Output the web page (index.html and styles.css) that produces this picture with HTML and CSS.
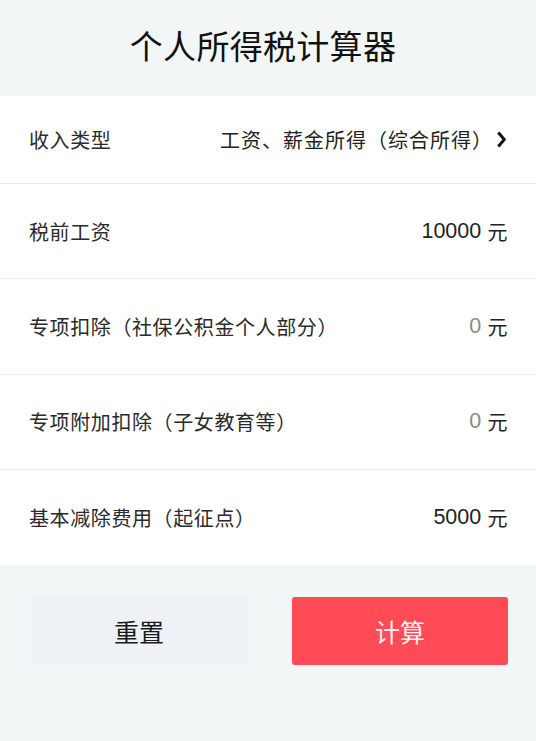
FILE: index.html
```html
<!DOCTYPE html>
<html lang="zh-CN">
<head>
<meta charset="utf-8">
<title>个人所得税计算器</title>
<link rel="stylesheet" href="styles.css">
</head>
<body>
<div class="page">
  <header class="header">
    <h1 class="title">个人所得税计算器</h1>
  </header>
  <ul class="list">
    <li class="row row-first">
      <span class="label">收入类型</span>
      <span class="value value-type">工资、薪金所得（综合所得）<svg class="chev" viewBox="0 0 9 17" width="9" height="17"><path d="M1.3 1.5 L7.3 8.5 L1.3 15.5" fill="none" stroke="#111" stroke-width="3" stroke-linejoin="miter"/></svg></span>
    </li>
    <li class="row">
      <span class="label">税前工资</span>
      <span class="value"><span class="num">10000</span> 元</span>
    </li>
    <li class="row">
      <span class="label">专项扣除（社保公积金个人部分）</span>
      <span class="value"><span class="num muted">0</span> 元</span>
    </li>
    <li class="row">
      <span class="label">专项附加扣除（子女教育等）</span>
      <span class="value"><span class="num muted">0</span> 元</span>
    </li>
    <li class="row row-last">
      <span class="label">基本减除费用（起征点）</span>
      <span class="value"><span class="num">5000</span> 元</span>
    </li>
  </ul>
  <div class="actions">
    <button class="btn btn-reset">重置</button>
    <button class="btn btn-calc">计算</button>
  </div>
</div>
</body>
</html>
```

FILE: styles.css
```css
html, body {
  margin: 0;
  padding: 0;
  background: #f3f6f6;
}
body {
  font-family: "Liberation Sans", "Noto Sans CJK SC", sans-serif;
  color: #222;
}
.page {
  width: 536px;
  min-height: 741px;
  background: #f3f6f6;
}
.header {
  height: 96px;
  display: flex;
  align-items: center;
  justify-content: center;
}
.title {
  margin: 0;
  font-family: "Noto Sans CJK SC", sans-serif;
  font-weight: 400;
  font-size: 33px;
  color: #111;
  letter-spacing: 0.3px;
  padding: 0 10px 6px 0;
}
.list {
  list-style: none;
  margin: 0;
  padding: 0;
  background: #fff;
}
.row {
  height: 94.25px;
  display: flex;
  align-items: center;
  justify-content: space-between;
  padding: 0 28px 0 29px;
  border-bottom: 1px solid #ececec;
  font-size: 20px;
}
.row-first {
  height: 87px;
}
.row-last {
  height: 95.25px;
  border-bottom: none;
}
.label {
  font-family: "Noto Sans CJK SC", sans-serif;
  color: #2a2a2a;
  letter-spacing: 0.6px;
}
.value {
  display: flex;
  align-items: center;
  font-family: "Liberation Sans", "Noto Sans CJK SC", sans-serif;
  color: #222;
  white-space: pre;
  letter-spacing: 0.6px;
}
.value-type {
  letter-spacing: 1px;
}
.num {
  font-size: 21.5px;
  letter-spacing: 0;
}
.muted {
  color: #8a8a8a;
}
.chev {
  margin-left: 4px;
  margin-right: 2px;
}
.actions {
  display: flex;
  gap: 45px;
  padding: 32px 28px 0 31px;
}
.btn {
  flex: 1;
  height: 68px;
  border: none;
  border-radius: 3px;
  font-family: "Noto Sans CJK SC", sans-serif;
  font-size: 25px;
  cursor: pointer;
}
.btn-reset {
  background: #eef1f5;
  color: #1a1a1a;
}
.btn-calc {
  background: #ff4b55;
  color: #fff3f3;
}
```
